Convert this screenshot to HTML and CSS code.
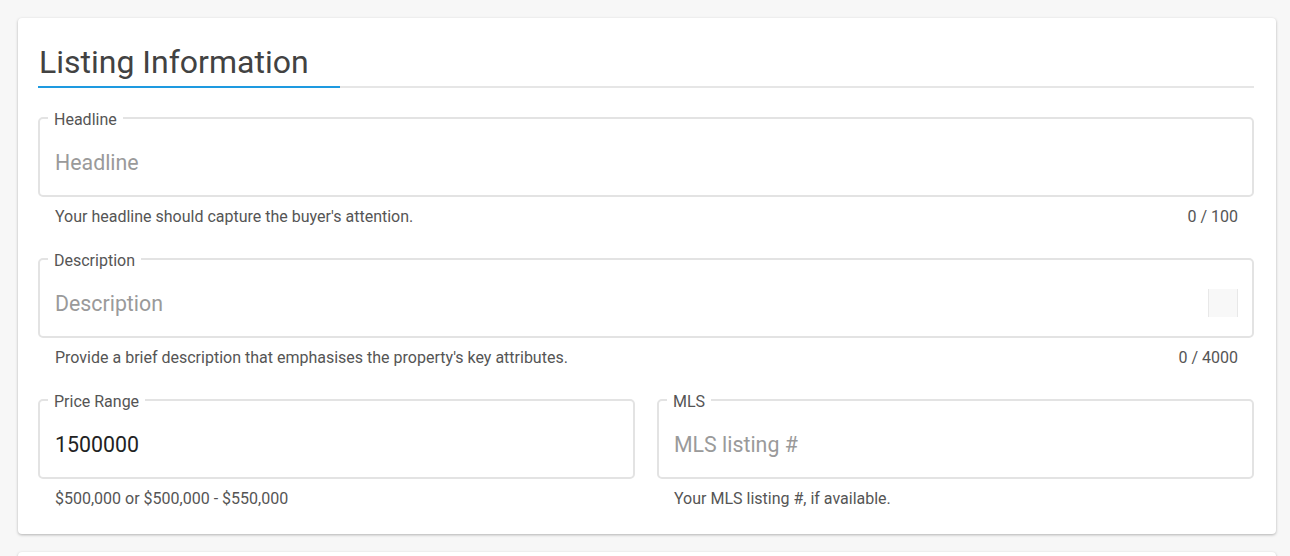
FILE: index.html
```html
<!DOCTYPE html>
<html>
<head>
<meta charset="utf-8">
<link rel="stylesheet" href="styles.css">
</head>
<body>
<div class="card">
  <h2 class="title">Listing Information</h2>
  <div class="rule"><div class="rule-accent"></div></div>

  <div class="field-group">
    <fieldset class="field">
      <legend>Headline</legend>
      <div class="control"><span class="placeholder">Headline</span></div>
    </fieldset>
    <div class="help"><span>Your headline should capture the buyer's attention.</span><span>0 / 100</span></div>
  </div>

  <div class="field-group">
    <fieldset class="field">
      <legend>Description</legend>
      <div class="control"><span class="placeholder">Description</span><span class="handle"></span></div>
    </fieldset>
    <div class="help"><span>Provide a brief description that emphasises the property's key attributes.</span><span>0 / 4000</span></div>
  </div>

  <div class="row">
    <div class="field-group">
      <fieldset class="field">
        <legend>Price Range</legend>
        <div class="control"><span class="value">1500000</span></div>
      </fieldset>
      <div class="help"><span>$500,000 or $500,000 - $550,000</span></div>
    </div>
    <div class="field-group">
      <fieldset class="field">
        <legend>MLS</legend>
        <div class="control"><span class="placeholder">MLS listing #</span></div>
      </fieldset>
      <div class="help"><span>Your MLS listing #, if available.</span></div>
    </div>
  </div>
</div>
<div class="card next"></div>
</body>
</html>
```

FILE: styles.css
```css
html, body {
  margin: 0;
  padding: 0;
}
body {
  background: #f7f7f7;
  padding: 18px 14px 18px 18px;
  font-family: Roboto, "Liberation Sans", sans-serif;
  color: #555;
  overflow: hidden;
}
.card {
  background: #fff;
  border-radius: 4px;
  box-shadow: 0 1px 3px rgba(0,0,0,0.28);
  padding: 24px 22px 25px 20px;
}
.card.next {
  margin-top: 18px;
  height: 60px;
  padding: 0;
}
.title {
  margin: 0;
  font-size: 32px;
  line-height: 40px;
  font-weight: 400;
  color: #424242;
  padding-left: 1px;
}
.rule {
  margin-top: 4px;
  height: 2px;
  background: #e6e6e6;
}
.rule-accent {
  width: 302px;
  height: 2px;
  background: #1e9ae0;
}
.field-group {
  margin-top: 19px;
}
.field-group + .field-group {
  margin-top: 21px;
}
.field {
  margin: 0;
  border: 2px solid #e3e3e3;
  border-radius: 5px;
  padding: 0 14px 0 15px;
  min-width: 0;
}
.field legend {
  margin-left: -7px;
  padding: 4px 6px 0;
  font-size: 16px;
  line-height: 18px;
  color: #555;
}
.control {
  display: flex;
  align-items: center;
  justify-content: space-between;
  height: 66px;
  font-size: 21.33px;
}
.placeholder {
  color: #9a9a9a;
}
.value {
  color: #222;
}
.handle {
  width: 28px;
  height: 28px;
  background: #f8f8f8;
  border-left: 1px solid #e8e8e8;
  border-right: 1px solid #e8e8e8;
}
.help {
  display: flex;
  justify-content: space-between;
  margin-top: 10px;
  padding: 0 16px 0 17px;
  font-size: 16px;
  line-height: 20px;
  color: #555;
}
.row {
  display: grid;
  grid-template-columns: 1fr 1fr;
  gap: 22px;
  margin-top: 21px;
}
.row .field-group {
  margin-top: 0;
}
```
